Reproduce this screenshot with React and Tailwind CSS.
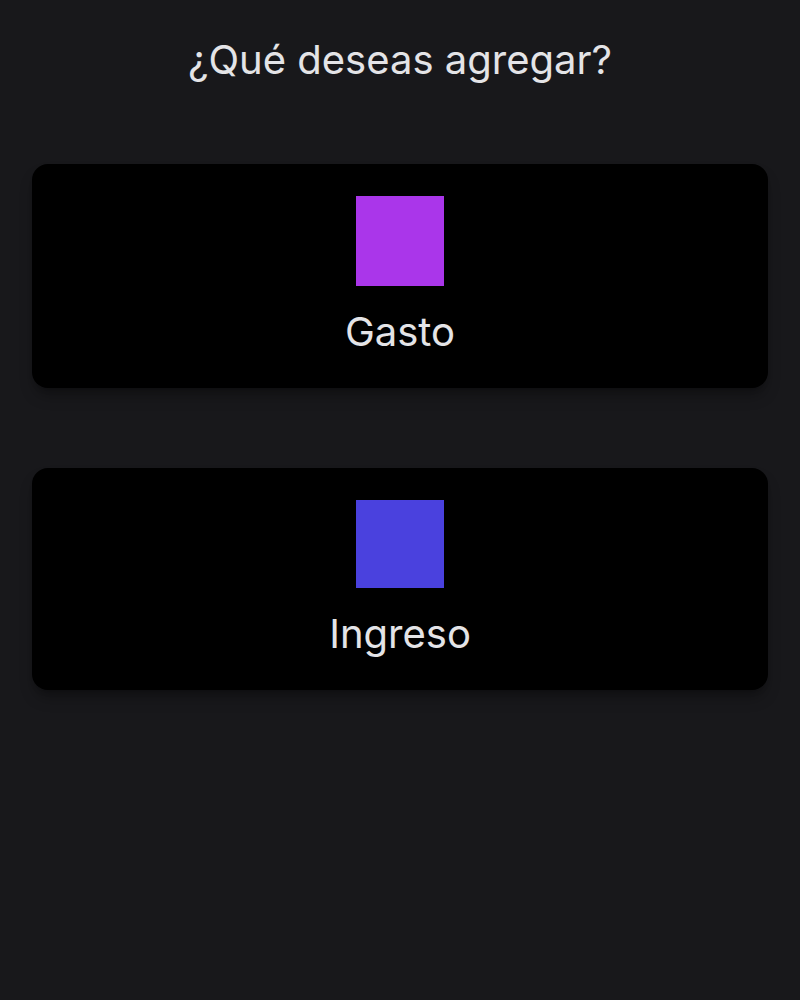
import React from 'react';

const options = [
  { label: 'Gasto', color: 'bg-[#aa36ea]', card: 'h-[224px]', box: 'h-[90px]' },
  { label: 'Ingreso', color: 'bg-[#4a41de]', card: 'h-[222px]', box: 'h-[88px]' },
];

export default function App() {
  return (
    <div className="min-h-screen bg-[#18181b] px-8 font-['Inter','Liberation_Sans',sans-serif] text-[#e4e4e7]">
      {/* encabezado */}
      <h1 className="pt-[34px] text-center text-[40px] leading-[52px]">¿Qué deseas agregar?</h1>

      {/* opciones */}
      <div className="mt-[78px] flex flex-col gap-20">
        {options.map((opt) => (
          <button
            key={opt.label}
            className={`flex ${opt.card} flex-col items-center rounded-2xl bg-black pt-8 shadow-lg shadow-black/30`}
          >
            <div className={`${opt.box} w-[88px] ${opt.color}`}></div>
            <span className="mt-5 text-[40px] leading-[52px]">{opt.label}</span>
          </button>
        ))}
      </div>
    </div>
  );
}
